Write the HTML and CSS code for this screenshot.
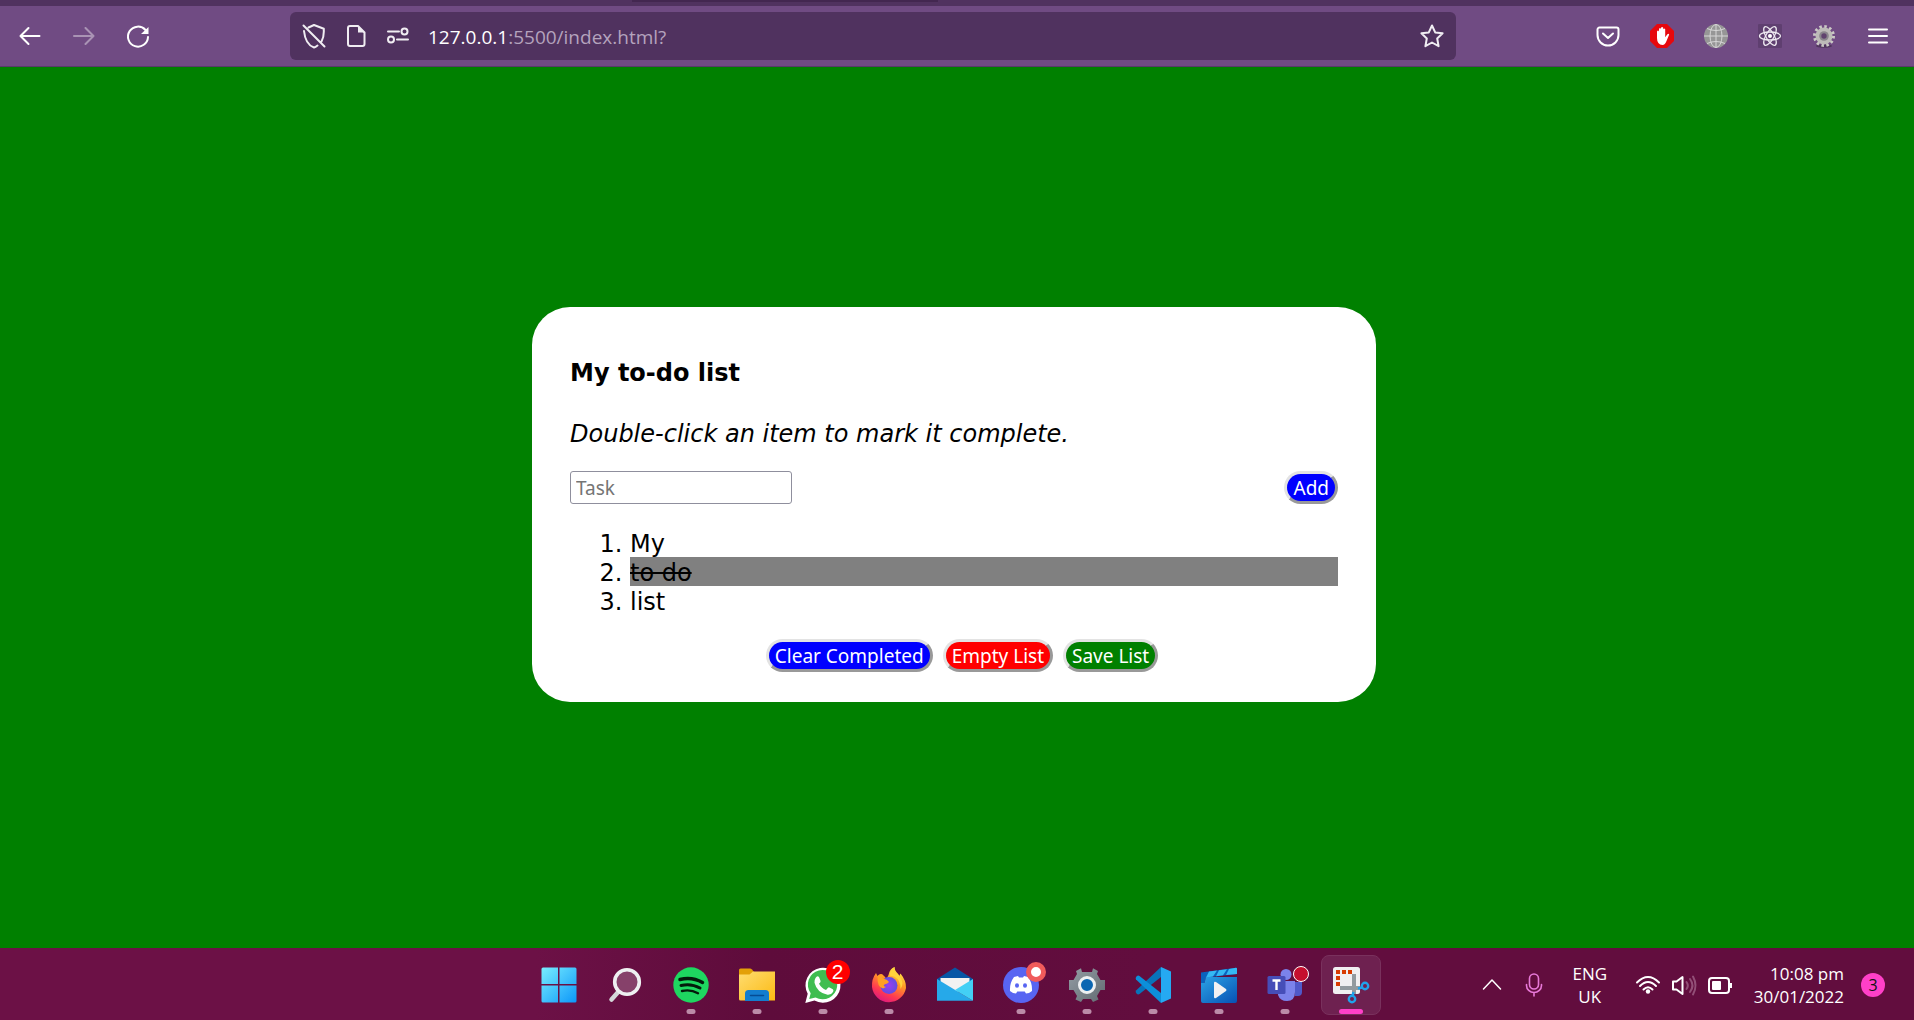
FILE: index.html
```html
<!DOCTYPE html>
<html lang="en">
<head>
<meta charset="utf-8">
<title>My to-do list</title>
<link rel="stylesheet" href="styles.css">
</head>
<body>
<header class="browser">
  <div class="tabstrip"><div class="tab-shadow"></div></div>
  <nav class="toolbar" aria-label="Browser">
    <div class="tools">
      <button class="tool" aria-label="Back"><svg viewBox="0 0 24 24"><path d="M21.500 12H2.500M10.500 4L2.500 12l8 8" class="line"/></svg></button>
      <button class="tool dim" aria-label="Forward" disabled><svg viewBox="0 0 24 24"><path d="M2 12h19.500M13.500 4l8 8-8 8" class="line"/></svg></button>
      <button class="tool" aria-label="Reload"><svg viewBox="0 0 24 24"><path d="M19.500 6A10 10 0 1 0 22 13" class="line"/><path d="M22.500 3v7h-7.500z" fill="#fff"/></svg></button>
    </div>
    <div class="address">
      <svg class="icon" viewBox="0 0 24 24"><path d="M6.500 3.500L12 1l9.800 3.800v3c0 4-.6 6.600-2.200 9.400M15.500 21.500c-1.300 1-2.500 1.700-3.500 2-6-2-9-7-10-16.500M1.500 1.500l21 21" class="line pale"/></svg>
      <svg class="icon" viewBox="0 0 24 24"><path d="M6 2h8l6.500 6.500V20a2 2 0 0 1-2 2H6a2 2 0 0 1-2-2V4a2 2 0 0 1 2-2z" class="line pale"/><path d="M14 2v6.500h6.500z" fill="#f0edf2"/></svg>
      <svg class="icon" viewBox="0 0 24 24"><g class="line pale"><path d="M2 7.500h11M11 15.500h11"/><circle cx="18.500" cy="7.500" r="3"/><circle cx="5" cy="15.500" r="3"/></g></svg>
      <div class="url" role="textbox" aria-label="Address" tabindex="0"><span class="host">127.0.0.1</span>:5500/index.html?</div>
      <button class="tool" aria-label="Bookmark this page"><svg viewBox="0 0 24 24"><path d="M12 1.500l3.200 6.900 7.400.9-5.400 5.200 1.400 7.700-6.600-3.700-6.600 3.700 1.400-7.700L1.400 9.300l7.400-.9z" class="line pale"/></svg></button>
    </div>
    <div class="tools">
      <button class="tool" aria-label="Pocket"><svg viewBox="0 0 24 24"><path d="M3.500 3.500h17a2 2 0 0 1 2 2V11a10.500 10.500 0 0 1-21 0V5.500a2 2 0 0 1 2-2zM7 9.500l5 4.500 5-4.500" class="line"/></svg></button>
      <button class="tool" aria-label="Ad blocker"><svg viewBox="0 0 24 24"><path d="M7 0h10l7 7v10l-7 7H7l-7-7V7z" fill="#e6080d"/><path d="M7 14V7.500q1-1.800 2 0V11V5q1-1.800 2 0v5V3.800q1.200-1.600 2.200 0V10V5.200q1-1.500 2 0v8l2-2.700q1.300-1.300 2 0l-2.700 6.500Q15 21 12.500 21 7 20.500 7 14z" fill="#fff"/></svg></button>
      <button class="tool" aria-label="Web tools"><svg viewBox="0 0 24 24"><circle cx="12" cy="12" r="12" fill="#969696"/><g fill="none" stroke="#d6d6d6"><ellipse cx="12" cy="12" rx="6" ry="11.500"/><path d="M12 0v24M0 12h24M3 4.500q9 4 18 0M3 19.500q9-4 18 0"/></g></svg></button>
      <button class="tool" aria-label="React tools"><svg viewBox="0 0 24 24"><rect width="24" height="24" rx="1" fill="#5f3f70"/><g fill="none" stroke="#eee9f1" stroke-width="1.300"><ellipse cx="12" cy="12" rx="10.500" ry="4"/><ellipse cx="12" cy="12" rx="10.500" ry="4" transform="rotate(60 12 12)"/><ellipse cx="12" cy="12" rx="10.500" ry="4" transform="rotate(120 12 12)"/></g><circle cx="12" cy="12" r="2" fill="#fff"/></svg></button>
      <button class="tool" aria-label="Settings extension"><svg viewBox="0 0 24 24"><ellipse cx="12" cy="22" rx="8" ry="1.800" fill="#50365e"/><circle cx="12" cy="12" r="9.500" fill="none" stroke="#cbc9c6" stroke-width="3" stroke-dasharray="2.500 2.475"/><circle cx="12" cy="12" r="6" fill="#57415f" stroke="#bdbbb8" stroke-width="5"/><circle cx="12" cy="12" r="4.800" fill="#8a868c"/><circle cx="12" cy="12" r="2.700" fill="#60436e"/></svg></button>
      <button class="tool" aria-label="Menu"><svg viewBox="0 0 24 24"><path d="M3 5.500h18M3 12h18M3 18.500h18" class="line"/></svg></button>
    </div>
  </nav>
</header>

<main class="page">
  <section class="card">
    <h1 class="title">My to-do list</h1>
    <p class="hint">Double-click an item to mark it complete.</p>
    <form class="entry">
      <input class="task" type="text" placeholder="Task" aria-label="Task">
      <button class="pill blue" type="button">Add</button>
    </form>
    <ol class="list">
      <li>My</li>
      <li class="done">to do</li>
      <li>list</li>
    </ol>
    <div class="actions">
      <button class="pill blue" type="button">Clear Completed</button>
      <button class="pill red" type="button">Empty List</button>
      <button class="pill green" type="button">Save List</button>
    </div>
  </section>
</main>

<footer class="taskbar">
  <div class="apps">
    <button class="app" aria-label="Start"><svg viewBox="0 0 36 36"><defs><linearGradient id="win" x1="0" y1="0" x2="1" y2="1"><stop stop-color="#79eeff"/><stop offset="1" stop-color="#0c97f9"/></linearGradient></defs><path d="M2 .5h15v16.500H.5V2A1.500 1.500 0 0 1 2 .5zM18.500.5H34A1.500 1.500 0 0 1 35.500 2v15h-17zM.5 18.500H17v17H2A1.500 1.500 0 0 1 .5 34zM18.500 18.500h17V34a1.500 1.500 0 0 1-1.500 1.500H18.500z" fill="url(#win)"/></svg></button>
    <button class="app" aria-label="Search"><svg viewBox="0 0 36 36"><path d="M12.500 23.500l-8 9" stroke="#d4d7d9" stroke-width="4.500" stroke-linecap="round"/><circle cx="20" cy="15" r="12.300" fill="#86416a" stroke="#eef0f1" stroke-width="3.600"/></svg></button>
    <button class="app running" aria-label="Spotify"><svg viewBox="0 0 36 36"><circle cx="18" cy="18" r="17.700" fill="#1ed760"/><g fill="none" stroke="#041b0b" stroke-linecap="round"><path d="M7 12.500q12-3 22.500 3" stroke-width="3.500"/><path d="M8 18.500q10-2.500 19 2.500" stroke-width="3"/><path d="M9 24q8.500-2 16 2.200" stroke-width="2.400"/></g></svg></button>
    <button class="app running" aria-label="File Explorer"><svg viewBox="0 0 36 36"><defs><linearGradient id="fold" x1="0" y1="0" x2="1" y2="1"><stop stop-color="#ffdc70"/><stop offset="1" stop-color="#fbba13"/></linearGradient></defs><path d="M0 3q0-1.500 1.500-1.500H11q1 0 2 1L15 5v5H0z" fill="#e3a008"/><path d="M0 7.500h10.500L14 4.500h22V33.500H1.500Q0 33.500 0 32z" fill="url(#fold)"/><path d="M6 34V26.500q0-3.500 3.500-3.500h17q3.500 0 3.500 3.500V34z" fill="#147dce"/><path d="M11.500 28.500h13" stroke="#064c93" stroke-width="1.500" stroke-linecap="round"/></svg></button>
    <button class="app running" aria-label="WhatsApp"><svg viewBox="0 0 36 36"><path d="M.3 36l2.400-9.300A17.500 17.500 0 1 1 9.500 33.500z" fill="#fff"/><path d="M4.200 32l1.500-5.700A14.700 14.700 0 1 1 10.500 30.500z" fill="#3fbd50"/><path d="M10.500 11q2-3 3.700-.5l1.400 3.500q.3 1-1.600 2.800 2.500 4.500 7 6.200l2-2.300q.8-.8 2 0l2.800 1.500q1.200.7.2 2.800-2 3.200-5.500 2.800-10.500-2-13-12-.2-3 1-4.800z" fill="#fff"/></svg><span class="count">2</span></button>
    <button class="app running" aria-label="Firefox"><svg viewBox="0 0 36 36"><defs><linearGradient id="fox" x1=".8" y1="0" x2=".3" y2="1"><stop stop-color="#fff44f"/><stop offset=".4" stop-color="#ff9a24"/><stop offset=".75" stop-color="#ff3852"/><stop offset="1" stop-color="#db1980"/></linearGradient><radialGradient id="orb"><stop stop-color="#9b3df0"/><stop offset="1" stop-color="#624de0"/></radialGradient></defs><path d="M5 6l1.500 3L11 7.500Q14 9 15.500 12L17.500 8Q18.500 2 23.500 0q-.5 4 3 6.500L28 9.500l1.500-3Q35.500 14 35 21A17.200 17.200 0 0 1 1 20Q.5 12 5 6z" fill="url(#fox)"/><circle cx="18" cy="18.500" r="8.500" fill="url(#orb)"/><path d="M6.500 9q3-3.500 6-.5L11 11l5 2 2 2q-1.500 2-4 2.200-3 1.800 1 2.800l-3 1.500q-6-1-5.500-12.500z" fill="#ff9f24"/><path d="M18.500 8.500Q19 3 23.500 0q0 4 4.500 8 6 8 1.500 14 .5-9-6.500-12.500z" fill="#ffd33c"/></svg></button>
    <button class="app" aria-label="Mail"><svg viewBox="0 0 36 36"><path d="M0 12L18 .5 36 12v5H0z" fill="#0756a5"/><path d="M3.500 11h29v7L18 26 3.500 18z" fill="#f2f2f2"/><path d="M0 12l36 21.800H0z" fill="#26a9e9"/><path d="M36 12L18 23l18 10.800z" fill="#43d0f5"/></svg></button>
    <button class="app running" aria-label="Discord"><svg viewBox="0 0 36 36"><circle cx="18" cy="18" r="18" fill="#5865f2"/><path d="M11 10l4-1 1 1.500h4L21 9l4 1q4.500 6 4 14-3 2.500-6 2.500l-1.300-2h-7.400l-1.300 2q-3 0-6-2.500-.5-8 4-14z" fill="#fff"/><ellipse cx="14" cy="18.500" rx="2" ry="2.300" fill="#5865f2"/><ellipse cx="22" cy="18.500" rx="2" ry="2.300" fill="#5865f2"/></svg><span class="dot coral"></span></button>
    <button class="app running" aria-label="Settings"><svg viewBox="0 0 36 36"><defs><linearGradient id="cog" x1="0" y1="0" x2="1" y2="1"><stop stop-color="#939da4"/><stop offset="1" stop-color="#626b72"/></linearGradient></defs><path d="M13 5L12 1.200 7 4l1 3-3.500 6H0v10h4.500L8 29l-1.500 3.500L12 35l2-3h8l2 3 5.500-2.500L28 29l3.500-6H36V13h-4.500L28 7l1-3-5-2.800L23 5z" fill="url(#cog)"/><circle cx="18" cy="18" r="7.500" fill="#0a66b2" stroke="#edf0f2" stroke-width="3"/></svg></button>
    <button class="app running" aria-label="Visual Studio Code"><svg viewBox="0 0 36 36"><path d="M1 23.500L26 0v10L4.500 27q-1.500 1-3-.5-1.500-1.500-.5-3z" fill="#0873ba"/><path d="M1 12.500L26 36V26L4.500 9Q3 8 1.500 9.500q-1.500 1.500-.5 3z" fill="#0c8fd9"/><path d="M26 0l10 4.500v27L26 36z" fill="#25a9f2"/></svg></button>
    <button class="app running" aria-label="Movies"><svg viewBox="0 0 36 36"><defs><linearGradient id="film" x1="0" y1="0" x2="1" y2="1"><stop stop-color="#2ba3e5"/><stop offset="1" stop-color="#0751b4"/></linearGradient></defs><path d="M0 16V5.500L35 .800q1 0 1 1V7L5 10.500 3.500 16z" fill="#0a63be"/><path d="M8 4.500l8-1-4 6-7 1zM18 3.200l8-1-4 6-7 1zM28 2l7-1.200q1 0 1 1V7l-11 1z" fill="#35b8f3"/><path d="M5 10h31v24q0 2-2 2H2q-2 0-2-2V16h3.500z" fill="url(#film)"/><path d="M13 16q0-2 2-1l10 7q1 1 0 2l-10 7q-2 1-2-1z" fill="#f2f2f2"/></svg></button>
    <button class="app running" aria-label="Teams"><svg viewBox="0 0 36 36"><circle cx="19" cy="7.500" r="5.500" fill="#7b83eb"/><path d="M28 15h7v10q0 4-4 4h-3z" fill="#5059c9"/><path d="M10 14h18v11q0 9-8 9-7 0-9-6z" fill="#7b83eb"/><rect x=".5" y="9" width="18" height="18" rx="1.500" fill="#464eb8"/><path d="M5.500 13.500h8M9.500 13.500v9.500" stroke="#fff" stroke-width="2.400"/></svg><span class="dot crimson"></span></button>
    <button class="app active" aria-label="Snipping Tool"><svg viewBox="0 0 36 36"><rect width="27" height="27" rx="2.500" fill="#f0eff1"/><path d="M3 5h4M9 5h4M15 5h4M3 11h4M3 17h4" stroke="#d83b01" stroke-width="4"/><path d="M21 7v20M7 21h20" stroke="#929a9f" stroke-width="4"/><circle cx="32" cy="19" r="3.200" fill="none" stroke="#20a3ea" stroke-width="2.400"/><circle cx="19" cy="32" r="3.200" fill="none" stroke="#20a3ea" stroke-width="2.400"/><path d="M25 21.500l4-1M20.500 25l-1 4" stroke="#20a3ea" stroke-width="2.500"/></svg></button>
  </div>
  <div class="tray">
    <button class="tool" aria-label="Show hidden icons"><svg viewBox="0 0 24 24"><path d="M3.500 16L12 7l8.500 9" class="line thin"/></svg></button>
    <button class="tool" aria-label="Microphone"><svg viewBox="0 0 24 24"><g fill="none" stroke="#e879d8" stroke-width="1.600" stroke-linecap="round"><rect x="7.500" y="1" width="9" height="15" rx="4.500"/><path d="M4.500 11.500v1a7.500 7 0 0 0 15 0v-1M12 19.500V23"/></g></svg></button>
    <button class="lang">ENG<br>UK</button>
    <div class="status">
      <svg class="icon" viewBox="0 0 24 24"><g class="line"><path d="M1 9.500Q12-1.500 23 9.500M4 13q8-8 16 0M7.500 16.500q4.500-4.500 9 0"/></g><circle cx="12" cy="18.500" r="2.200" fill="#fff"/></svg>
      <svg class="icon" viewBox="0 0 24 24"><path d="M1 8.500h3.500L10.500 4v17l-6-4.500H1z" class="line"/><path d="M14.500 9q2.500 3.500 0 7M18 6q5 6.500 0 13M21 3.500q5 9 0 18" class="line faint"/></svg>
      <svg class="icon" viewBox="0 0 24 24"><rect x="1" y="5" width="20" height="15" rx="3" class="line"/><rect x="4" y="8" width="9" height="9" rx="1" fill="#fff"/><path d="M21.500 10H24v5h-2.500z" fill="#fff"/></svg>
    </div>
    <time class="clock" datetime="2022-01-30T22:08">10:08 pm<br>30/01/2022</time>
    <span class="notice">3</span>
  </div>
</footer>
</body>
</html>
```
FILE: styles.css
```css
* { box-sizing: border-box; }

body {
  margin: 0;
  min-height: 100vh;
  display: flex;
  flex-direction: column;
  background: #008000;
  font-family: "DejaVu Sans", sans-serif;
}

button {
  font: inherit;
  border: 0;
  padding: 0;
  background: none;
  color: inherit;
}

svg { display: block; width: 100%; height: 100%; overflow: visible; }

.line {
  fill: none;
  stroke: #fff;
  stroke-width: 2;
  stroke-linecap: round;
  stroke-linejoin: round;
}
.pale { stroke: #f0edf2; }
.thin { stroke-width: 1.5; }
.faint { stroke: #924f77; }

.icon, .tool { width: 24px; height: 24px; flex: none; }
.dim { opacity: 0.4; }

/* Browser chrome */
.browser { background: #704b83; border-bottom: 1px solid #593b69; }
.tabstrip { height: 6px; background: #50325f; }
.tab-shadow {
  width: 16%;
  height: 2px;
  margin-left: 33%;
  background: #432750;
}
.toolbar {
  display: flex;
  align-items: center;
  gap: 140px;
  padding: 6px 24px 6px 18px;
}
.tools { display: flex; gap: 30px; }
.address {
  flex: 1;
  height: 48px;
  display: flex;
  align-items: center;
  gap: 18px;
  padding: 0 12px;
  border-radius: 6px;
  background: #50325f;
}
.url {
  flex: 1;
  padding-top: 2px;
  font: 19px/28px "Open Sans", sans-serif;
  color: #b4a3bd;
  white-space: nowrap;
}
.host { color: #fff; }

/* To-do card */
.page {
  flex: 1;
  display: flex;
  align-items: center;
  justify-content: center;
  padding: 0 6px 6px 0;
}
.card {
  width: 844px;
  max-width: 90%;
  padding: 52px 38px 30px;
  border-radius: 38px;
  background: #fff;
  color: #000;
  font-size: 24px;
  line-height: 29px;
}
.title { margin: 0 0 32px; font-size: 24px; }
.hint { margin: 0 0 22px; font-style: italic; }
.entry { display: flex; justify-content: space-between; }
.task {
  width: 222px;
  height: 33px;
  padding: 0 5px;
  border: 1px solid #8f8f9d;
  border-radius: 3px;
  font: 19px/24px "Noto Sans", sans-serif;
}
.task::placeholder { color: #757575; }
.list { margin: 24px 0; padding-left: 60px; }
.list li { padding-top: 3px; line-height: 26px; }
.done { background: #808080; text-decoration: line-through; }
.actions {
  display: flex;
  justify-content: center;
  gap: 10px;
  padding-left: 16px;
}
.pill {
  height: 33px;
  padding: 0 6px;
  border: 3px solid;
  border-color: #e3e3e3 #999 #999 #e3e3e3;
  border-radius: 17px;
  color: #fff;
  font: 19px/24px "Noto Sans", sans-serif;
}
.blue { background: #00f; }
.red { background: #f00; }
.green { background: #008000; }

/* Taskbar */
.taskbar {
  height: 72px;
  display: grid;
  grid-template-columns: 1fr auto 1fr;
  align-items: center;
  padding: 2px 5px 0 0;
  background: linear-gradient(90deg, #6c1146, #6c1146 28%, #5e0c3b 40%, #620d3e 60%, #620d3e);
  color: #fff;
  font: 17px/23px "Open Sans", sans-serif;
}
.apps { grid-column: 2; display: flex; gap: 6px; }
.app {
  position: relative;
  width: 60px;
  height: 60px;
  padding: 12px;
  border: 1px solid transparent;
  border-radius: 8px;
}
.app svg { width: 36px; height: 36px; margin: -1px; }
.active { background: #6e2150; border-color: #79315d; }
.running::after, .active::after {
  content: "";
  position: absolute;
  left: 50%;
  bottom: 0;
  width: 9px;
  height: 5px;
  border-radius: 3px;
  background: #bb8ba8;
  transform: translateX(-50%);
}
.active::after { width: 24px; background: #ff40c8; }
.count, .notice {
  width: 24px;
  height: 24px;
  border-radius: 50%;
  text-align: center;
}
.count {
  position: absolute;
  top: 4px;
  right: 2px;
  background: #f00;
  font: 21px/24px "Liberation Sans", sans-serif;
}
.dot {
  position: absolute;
  top: 6px;
  right: 4px;
  width: 20px;
  height: 20px;
  border-radius: 50%;
}
.coral { border: 5px solid #f05b5b; background: #fff; }
.crimson {
  width: 16px;
  height: 16px;
  top: 10px;
  right: 5px;
  border: 1px solid #fff;
  background: #c50f2e;
}
.tray {
  grid-column: 3;
  justify-self: end;
  display: flex;
  align-items: center;
  padding-right: 24px;
}
.tray .tool { margin-right: 18px; }
.lang { width: 52px; text-align: center; }
.status { display: flex; gap: 12px; margin: 0 22px 0 20px; }
.clock { text-align: right; }
.notice {
  margin-left: 17px;
  background: #ff40c8;
  color: #111;
  font-size: 16px;
  line-height: 24px;
}
```
